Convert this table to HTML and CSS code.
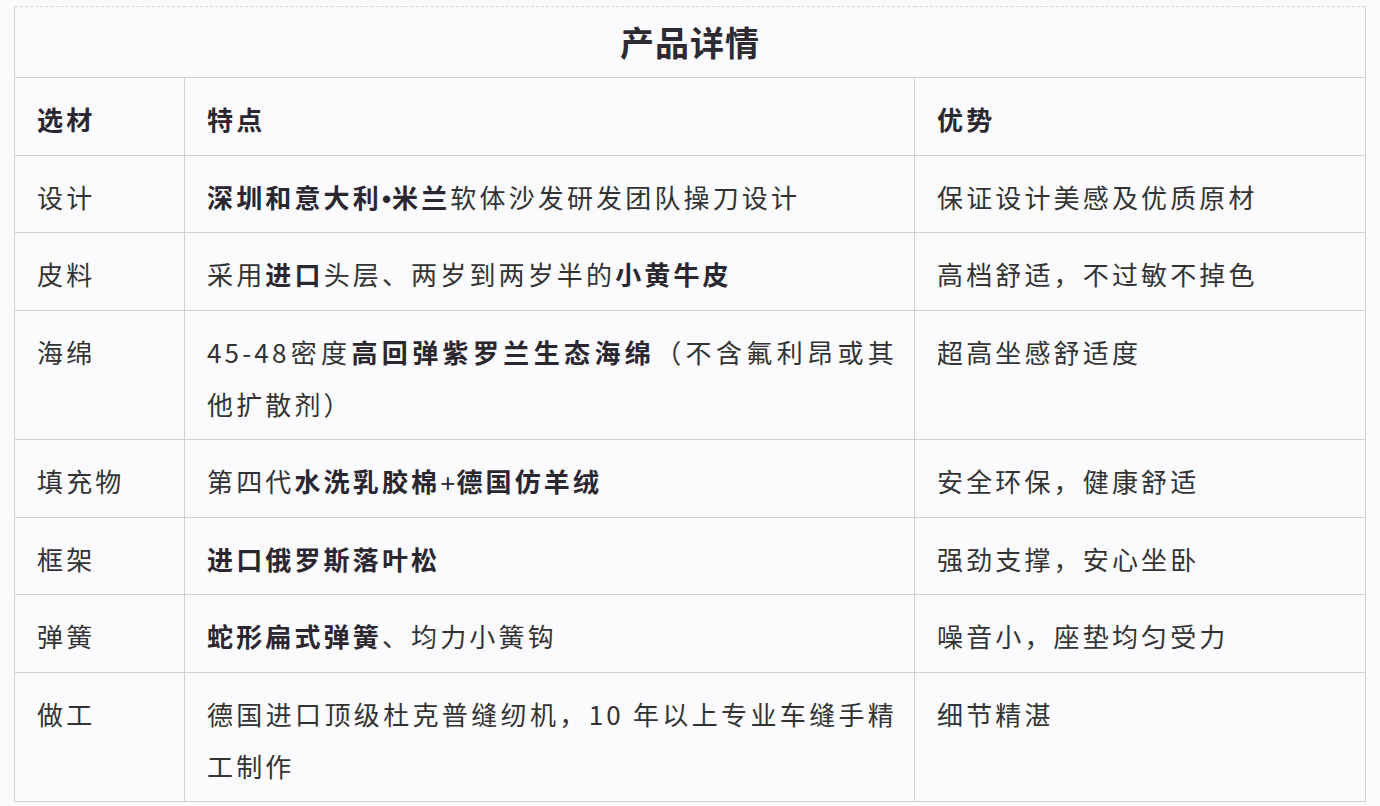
FILE: index.html
```html
<!DOCTYPE html>
<html lang="zh-CN">
<head>
<meta charset="utf-8">
<title>产品详情</title>
<link rel="stylesheet" href="styles.css">
</head>
<body>
<table class="spec">
  <colgroup>
    <col class="c-mat">
    <col class="c-feat">
    <col class="c-adv">
  </colgroup>
  <thead>
    <tr><th class="title" colspan="3">产品详情</th></tr>
    <tr class="head">
      <th>选材</th>
      <th>特点</th>
      <th>优势</th>
    </tr>
  </thead>
  <tbody>
    <tr>
      <td>设计</td>
      <td><b>深圳和意大利<span class="sep">•</span>米兰</b>软体沙发研发团队操刀设计</td>
      <td>保证设计美感及优质原材</td>
    </tr>
    <tr>
      <td>皮料</td>
      <td>采用<b>进口</b>头层、两岁到两岁半的<b>小黄牛皮</b></td>
      <td>高档舒适，不过敏不掉色</td>
    </tr>
    <tr>
      <td>海绵</td>
      <td>45-48密度<b>高回弹紫罗兰生态海绵</b>（不含氟利昂或其他扩散剂）</td>
      <td>超高坐感舒适度</td>
    </tr>
    <tr>
      <td>填充物</td>
      <td>第四代<b>水洗乳胶棉<span class="plus">+</span>德国仿羊绒</b></td>
      <td>安全环保，健康舒适</td>
    </tr>
    <tr>
      <td>框架</td>
      <td><b>进口俄罗斯落叶松</b></td>
      <td>强劲支撑，安心坐卧</td>
    </tr>
    <tr>
      <td>弹簧</td>
      <td><b>蛇形扁式弹簧</b>、均力小簧钩</td>
      <td>噪音小，座垫均匀受力</td>
    </tr>
    <tr>
      <td>做工</td>
      <td>德国进口顶级杜克普缝纫机，10 年以上专业车缝手精工制作</td>
      <td>细节精湛</td>
    </tr>
  </tbody>
</table>
</body>
</html>
```
FILE: styles.css
```css
html, body {
  margin: 0;
  padding: 0;
  background: #fbfbfd;
}

body {
  padding: 6px 14px 0;
  font-family: "Noto Sans CJK SC", "Liberation Sans", sans-serif;
  color: #333333;
}

.spec {
  width: 100%;
  border-collapse: collapse;
  table-layout: fixed;
  font-size: 26px;
  letter-spacing: 3.15px;
  line-height: 52px;
}

.c-mat { width: 170px; }
.c-feat { width: 730px; }

.spec th,
.spec td {
  border: 1px solid #d2d2d6;
  padding: 15px 17px 9.5px 22px;
  text-align: justify;
  vertical-align: top;
  font-weight: normal;
}

.spec .title {
  border-top: 1px dashed #d8d8dc;
  text-align: center;
  font-size: 34px;
  letter-spacing: 1px;
  font-weight: bold;
  color: #2e2a33;
  padding: 9px 0 9px;
}

.spec .head th {
  font-weight: bold;
  color: #2b2730;
  text-align: left;
}

.spec b {
  font-weight: bold;
  color: #2b2730;
}

.spec .sep,
.spec .plus {
  font-family: "Liberation Sans", sans-serif;
  letter-spacing: 1px;
  line-height: 1;
}

.spec .plus {
  font-weight: normal;
}
```
